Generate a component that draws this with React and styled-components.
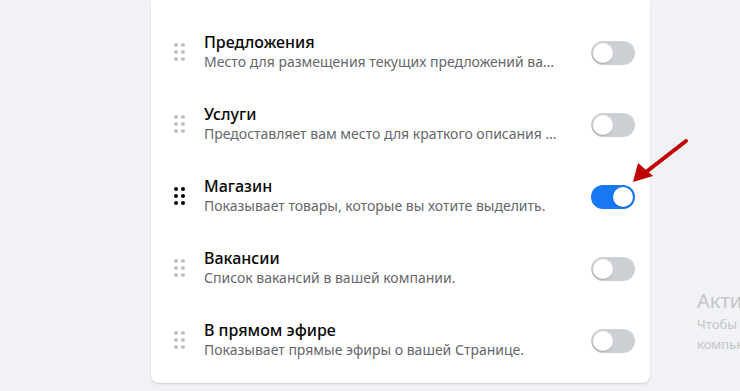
import React, { useState } from 'react';
import styled, { createGlobalStyle } from 'styled-components';

const GlobalStyle = createGlobalStyle`
  html, body {
    margin: 0;
    padding: 0;
    background: #f0f2f5;
    font-family: "Noto Sans", "Open Sans", sans-serif;
  }
`;

const Page = styled.div`
  position: relative;
  width: 740px;
  height: 391px;
  overflow: hidden;
  background: #f0f2f5;
`;

const Card = styled.section`
  margin-left: 151px;
  width: 499px;
  padding: 17px 0 6px;
  background: #fff;
  border-radius: 0 0 8px 8px;
  box-shadow: 0 1px 2px rgba(0, 0, 0, 0.15);
`;

const Row = styled.div`
  display: flex;
  align-items: center;
  height: 72px;
  padding: 0 15px 0 23px;
`;

const Handle = styled.div`
  display: grid;
  grid-template-columns: repeat(2, 4px);
  grid-auto-rows: 4px;
  column-gap: 3px;
  row-gap: 3px;
  width: 11px;
  margin: 0 19px 2px 0;

  span {
    border-radius: 50%;
    background: ${(p) => (p.$active ? '#050505' : '#bcc0c4')};
  }
`;

const Text = styled.div`
  width: 356px;
  min-width: 0;
  margin-right: 31px;
  padding-bottom: 4px;
`;

const Title = styled.div`
  font-size: 16px;
  font-weight: 500;
  line-height: 20px;
  color: #050505;
`;

const Desc = styled.div`
  font-size: 14px;
  line-height: 19px;
  color: #65676b;
  white-space: nowrap;
  overflow: hidden;
  text-overflow: ellipsis;
`;

const Switch = styled.button`
  position: relative;
  width: 44px;
  height: 24px;
  padding: 0;
  border: none;
  border-radius: 12px;
  background: ${(p) => (p.$on ? '#1877f2' : '#ccd0d5')};
  cursor: pointer;

  &::after {
    content: '';
    position: absolute;
    top: 2px;
    left: ${(p) => (p.$on ? '22px' : '2px')};
    width: 20px;
    height: 20px;
    border-radius: 50%;
    background: #fff;
    box-shadow: 0 1px 2px rgba(0, 0, 0, 0.2);
  }
`;

const Watermark = styled.div`
  position: absolute;
  left: 697px;
  top: 287px;
  width: 400px;
  color: #c4c6c9;
  font-family: "Noto Sans", sans-serif;
`;

const WmTitle = styled.div`
  font-size: 20px;
  line-height: 27px;
`;

const WmText = styled.div`
  font-size: 13px;
  line-height: 20px;
`;

const Arrow = styled.svg`
  position: absolute;
  left: 628px;
  top: 136px;
`;

const sections = [
  { title: 'Предложения', desc: 'Место для размещения текущих предложений вашей компании.', on: false },
  { title: 'Услуги', desc: 'Предоставляет вам место для краткого описания ваших услуг.', on: false },
  { title: 'Магазин', desc: 'Показывает товары, которые вы хотите выделить.', on: true, active: true },
  { title: 'Вакансии', desc: 'Список вакансий в вашей компании.', on: false },
  { title: 'В прямом эфире', desc: 'Показывает прямые эфиры о вашей Странице.', on: false },
];

const App = () => {
  const [items, setItems] = useState(sections);

  const toggle = (i) =>
    setItems(items.map((it, j) => (j === i ? { ...it, on: !it.on } : it)));

  return (
    <Page>
      <GlobalStyle />
      <Card>
        {items.map((it, i) => (
          <Row key={it.title}>
            <Handle $active={it.active}>
              {[0, 1, 2, 3, 4, 5].map((d) => (
                <span key={d} />
              ))}
            </Handle>
            <Text>
              <Title>{it.title}</Title>
              <Desc>{it.desc}</Desc>
            </Text>
            <Switch $on={it.on} onClick={() => toggle(i)} />
          </Row>
        ))}
      </Card>

      <Arrow width="64" height="52" viewBox="0 0 64 52">
        <line x1="58" y1="5" x2="18" y2="36" stroke="#c00000" strokeWidth="4" strokeLinecap="round" />
        <polygon points="5,46 10,27 25,40" fill="#c00000" />
      </Arrow>

      <Watermark>
        <WmTitle>Активация Windows</WmTitle>
        <WmText>Чтобы активировать Windows, перейдите в раздел</WmText>
        <WmText>компьютера.</WmText>
      </Watermark>
    </Page>
  );
};

export default App;
